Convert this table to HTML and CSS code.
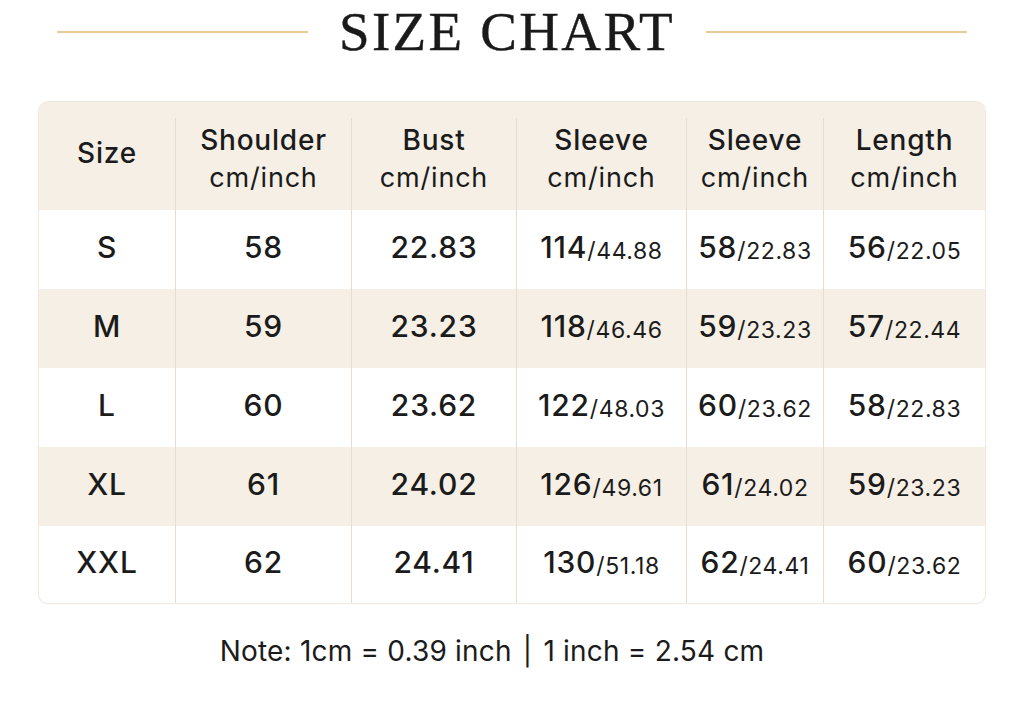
FILE: index.html
```html
<!DOCTYPE html>
<html>
<head>
<meta charset="utf-8">
<link rel="stylesheet" href="styles.css">
</head>
<body>
<div class="page">
  <header class="title-bar">
    <span class="rule rule-left"></span>
    <h1 class="title">SIZE CHART</h1>
    <span class="rule rule-right"></span>
  </header>
  <div class="chart">
    <div class="row head">
      <div class="cell"><span class="h1">Size</span></div>
      <div class="cell"><span class="h1">Shoulder</span><span class="h2">cm/inch</span></div>
      <div class="cell"><span class="h1">Bust</span><span class="h2">cm/inch</span></div>
      <div class="cell"><span class="h1">Sleeve</span><span class="h2">cm/inch</span></div>
      <div class="cell"><span class="h1">Sleeve</span><span class="h2">cm/inch</span></div>
      <div class="cell"><span class="h1">Length</span><span class="h2">cm/inch</span></div>
    </div>
    <div class="row">
      <div class="cell">S</div><div class="cell">58</div><div class="cell">22.83</div>
      <div class="cell">114<small>/44.88</small></div><div class="cell">58<small>/22.83</small></div><div class="cell">56<small>/22.05</small></div>
    </div>
    <div class="row alt">
      <div class="cell">M</div><div class="cell">59</div><div class="cell">23.23</div>
      <div class="cell">118<small>/46.46</small></div><div class="cell">59<small>/23.23</small></div><div class="cell">57<small>/22.44</small></div>
    </div>
    <div class="row">
      <div class="cell">L</div><div class="cell">60</div><div class="cell">23.62</div>
      <div class="cell">122<small>/48.03</small></div><div class="cell">60<small>/23.62</small></div><div class="cell">58<small>/22.83</small></div>
    </div>
    <div class="row alt">
      <div class="cell">XL</div><div class="cell">61</div><div class="cell">24.02</div>
      <div class="cell">126<small>/49.61</small></div><div class="cell">61<small>/24.02</small></div><div class="cell">59<small>/23.23</small></div>
    </div>
    <div class="row last">
      <div class="cell">XXL</div><div class="cell">62</div><div class="cell">24.41</div>
      <div class="cell">130<small>/51.18</small></div><div class="cell">62<small>/24.41</small></div><div class="cell">60<small>/23.62</small></div>
    </div>
  </div>
  <p class="note">Note: 1cm = 0.39 inch <span class="pipe">|</span> 1 inch = 2.54 cm</p>
</div>
</body>
</html>
```

FILE: styles.css
```css
html, body {
  margin: 0;
  padding: 0;
  background: #ffffff;
}
.page {
  width: 1024px;
  height: 703px;
  display: flex;
  flex-direction: column;
  align-items: center;
  color: #1b1b1b;
  font-family: "Inter", "Noto Sans", sans-serif;
}
.title-bar {
  width: 910px;
  display: flex;
  align-items: center;
  justify-content: space-between;
  height: 64px;
}
.rule {
  height: 2px;
  background: #e6cb95;
}
.rule-left { width: 251px; }
.rule-right { width: 261px; }
.title {
  margin: 0;
  font-family: "Liberation Serif", "Times New Roman", serif;
  font-weight: normal;
  font-size: 55px;
  letter-spacing: 2.3px;
  line-height: 64px;
  color: #1a1a1a;
  -webkit-text-stroke: 0.4px #1a1a1a;
}
.chart {
  margin-top: 38px;
  width: 946px;
  border-radius: 9px;
  overflow: hidden;
  box-shadow: 0 0 0 1px #efe9e0, 0 1px 3px rgba(0,0,0,0.05);
}
.row {
  display: grid;
  grid-template-columns: 136px 176px 165px 170px 137px 162px;
  height: 79px;
  background: #ffffff;
}
.row.alt { background: #f6efe5; }
.row.head {
  height: 108px;
  background: #f5efe6;
}
.row.last { height: 77px; }
.cell {
  display: flex;
  flex-direction: row;
  justify-content: center;
  align-items: center;
  font-size: 30px;
  font-weight: 450;
  letter-spacing: 0.8px;
  border-left: 1px solid #e6ddd0;
  padding-bottom: 5px;
  box-sizing: border-box;
}
.row .cell:first-child { border-left: none; }
.head .cell {
  flex-direction: column;
  padding: 0 0 10px;
  margin-top: 16px;
}
.head .cell:first-child { padding-bottom: 22px; }
.h1 {
  font-size: 28px;
  line-height: 38px;
  font-weight: 500;
}
.h2 {
  font-size: 27px;
  line-height: 38px;
  font-weight: 400;
}
.cell small {
  font-size: 23px;
  font-weight: 400;
  letter-spacing: 0.6px;
  align-self: center;
  padding-top: 7px;
}
.note {
  margin: 31px 40px 0 0;
  font-size: 28px;
  letter-spacing: 0.2px;
  color: #1b1b1b;
}
.pipe {
  margin: 0 3px;
}
```
